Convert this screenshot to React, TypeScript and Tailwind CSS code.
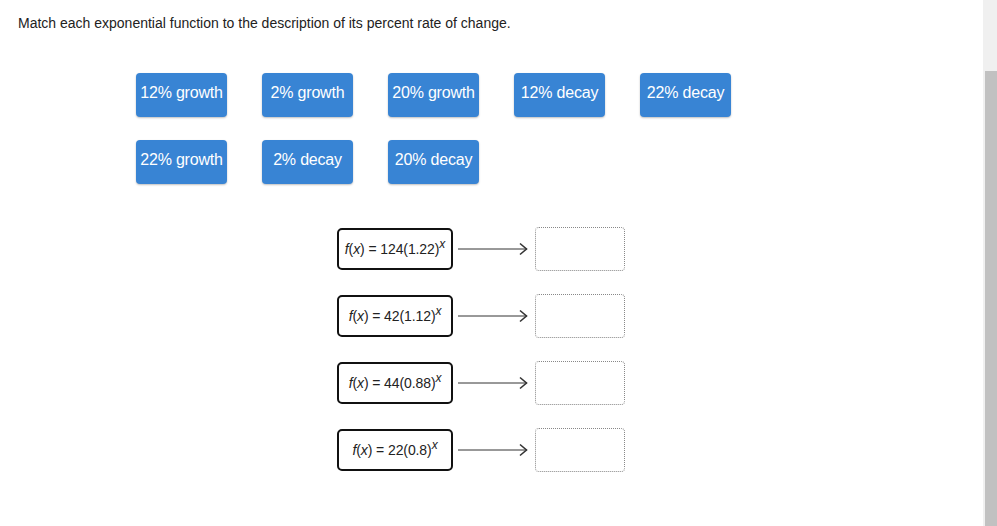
import React from "react";

const labels = [
  "12% growth",
  "2% growth",
  "20% growth",
  "12% decay",
  "22% decay",
  "22% growth",
  "2% decay",
  "20% decay",
];

const funcs: { a: string; b: string }[] = [
  { a: "124", b: "1.22" },
  { a: "42", b: "1.12" },
  { a: "44", b: "0.88" },
  { a: "22", b: "0.8" },
];

function Arrow() {
  return (
    <svg width="70" height="14" viewBox="0 0 70 14" className="block">
      <line x1="0" y1="7" x2="69" y2="7" stroke="#333" strokeWidth="1" />
      <polyline points="62,1.5 68.5,7 62,12.5" fill="none" stroke="#333" strokeWidth="1.6" />
    </svg>
  );
}

export default function App() {
  return (
    <div
      className="flex w-[997px] h-[526px] bg-white overflow-hidden"
      style={{ fontFamily: '"Liberation Sans", Arial, sans-serif' }}
    >
      <div className="flex-1 flex flex-col">
        <p className="pt-[15px] pl-[18px] text-[14px] leading-[16px] text-[#222]">
          Match each exponential function to the description of its percent rate of change.
        </p>
        <div className="mt-[42px] ml-[136px] grid grid-cols-[repeat(5,91px)] gap-x-[35px] gap-y-[23px]">
          {labels.map((l) => (
            <div
              key={l}
              className="h-[44px] pb-[4px] rounded-[4px] bg-[#3884d4] text-white text-[16px] flex items-center justify-center shadow-[0_1px_2px_rgba(0,0,0,0.25)] tracking-[-0.2px]"
            >
              {l}
            </div>
          ))}
        </div>
        <div className="mt-[43px] ml-[337px] flex flex-col gap-[23px]">
          {funcs.map((f) => (
            <div key={f.a} className="flex items-center h-[44px]">
              <div className="w-[116px] h-[42px] border-2 border-[#111] rounded-[5px] flex items-center justify-center text-[14px] text-[#222] tracking-[-0.1px]">
                <span>
                  <i>f</i>(<i>x</i>) = {f.a}({f.b})
                  <sup className="text-[12px] italic relative top-[-0.45em]">x</sup>
                </span>
              </div>
              <div className="ml-[5px]">
                <Arrow />
              </div>
              <div className="ml-[7px] w-[90px] h-[44px] border border-dotted border-[#888] rounded-[4px]" />
            </div>
          ))}
        </div>
      </div>
      <div className="w-[14px] h-full bg-[#f0f0f0] pt-[71px]">
        <div className="ml-[2px] h-full bg-[#c1c1c1]" />
      </div>
    </div>
  );
}
